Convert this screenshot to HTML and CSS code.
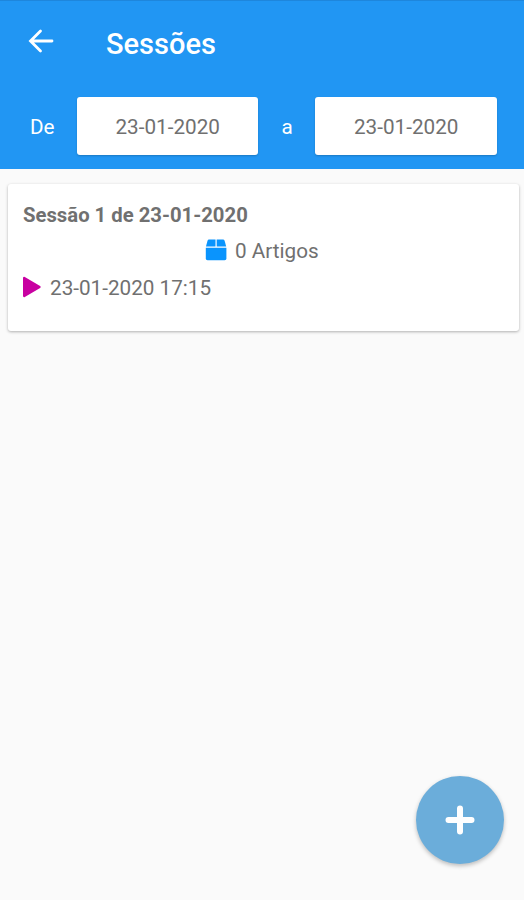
FILE: index.html
```html
<!DOCTYPE html>
<html lang="pt">
<head>
    <meta charset="UTF-8">
    <meta name="viewport" content="width=device-width, initial-scale=1.0">
    <title>Sessões</title>
    <link rel="stylesheet" href="styles.css">
</head>
<body>
    <header class="header">
        <div class="toolbar">
            <button class="back" aria-label="Voltar">
                <svg width="26" height="24" viewBox="0 0 26 24">
                    <path d="M24 12H3M12.5 2L2.5 12L12.5 22" fill="none" stroke="#fff" stroke-width="2.8" stroke-linecap="round"/>
                </svg>
            </button>
            <h1>Sessões</h1>
        </div>
        <div class="filter">
            <span class="label">De</span>
            <button class="date">23-01-2020</button>
            <span class="label">a</span>
            <button class="date">23-01-2020</button>
        </div>
    </header>

    <main>
        <div class="card">
            <h2>Sessão 1 de 23-01-2020</h2>
            <div class="articles">
                <svg width="22" height="22" viewBox="0 0 22 22" fill="#0a94fd">
                    <path d="M4 0.5H10.5V7.5H1L2.5 1.7Q2.9 0.5 4 0.5Z"/>
                    <path d="M11.7 0.5H18Q19.2 0.5 19.6 1.7L21.2 7.5H11.7Z"/>
                    <path d="M0.8 8.8H21.4V19.5Q21.4 21.2 19.7 21.2H2.5Q0.8 21.2 0.8 19.5Z"/>
                </svg>
                <span>0 Artigos</span>
            </div>
            <div class="start">
                <svg width="19" height="22" viewBox="0 0 19 22">
                    <path d="M1.2 2L16.5 11L1.2 20Z" fill="#c800a1" stroke="#c800a1" stroke-width="2.4" stroke-linejoin="round"/>
                </svg>
                <span>23-01-2020 17:15</span>
            </div>
        </div>
    </main>

    <button class="add" aria-label="Adicionar">
        <svg width="30" height="30" viewBox="0 0 30 30">
            <path d="M15 3.5V26.5M3.5 15H26.5" stroke="#fff" stroke-width="6" stroke-linecap="round"/>
        </svg>
    </button>
</body>
</html>
```

FILE: styles.css
```css
* {
    box-sizing: border-box;
}

body {
    margin: 0;
    min-height: 900px;
    background-color: #fafafa;
    color: #707070;
    font-family: Roboto, sans-serif;
    font-size: 20.7px;
}

h1, h2 {
    margin: 0;
}

button {
    padding: 0;
    border: none;
    font-family: inherit;
    font-size: inherit;
    color: inherit;
}

svg {
    display: block;
}

.header {
    height: 169px;
    border-top: 1px solid #1e86dc;
    background-color: #2196f3;
    color: #fff;
}

.toolbar {
    display: flex;
    align-items: center;
    height: 96px;
    padding: 0 28px 12px;
}

.back {
    margin-bottom: 4px;
    background: none;
}

.toolbar h1 {
    margin-left: 52px;
    padding-top: 2px;
    font-size: 29px;
    font-weight: 500;
}

.filter {
    display: flex;
    align-items: center;
    padding: 0 27px 0 30px;
}

.label {
    width: 47px;
    padding-top: 2px;
}

.label + .date + .label {
    width: 57px;
    padding-left: 23px;
}

.date {
    width: 182px;
    height: 58px;
    padding-top: 2px;
    border-radius: 3px;
    background-color: #fff;
    box-shadow: 0 1px 2px rgba(0,0,0,0.2);
    color: #707070;
}

.card {
    height: 147px;
    margin: 15px 5px 0 8px;
    padding: 19px 15px;
    border-radius: 3px;
    background-color: #fff;
    box-shadow: 0 1px 3px rgba(0,0,0,0.3);
}

.card h2 {
    font-size: 20.3px;
    line-height: 25px;
    font-weight: 700;
}

.articles,
.start {
    display: flex;
    align-items: center;
    height: 25px;
}

.articles {
    margin-top: 10px;
    padding-left: 182px;
    gap: 8px;
}

.articles svg {
    margin-bottom: 1px;
}

.start {
    margin-top: 12px;
    gap: 8px;
}

.start svg {
    margin-bottom: 2px;
}

.add {
    position: fixed;
    right: 20px;
    bottom: 36px;
    display: flex;
    align-items: center;
    justify-content: center;
    width: 88px;
    height: 88px;
    border-radius: 50%;
    background-color: #6badda;
    box-shadow: 0 2px 4px rgba(0,0,0,0.25);
}
```
